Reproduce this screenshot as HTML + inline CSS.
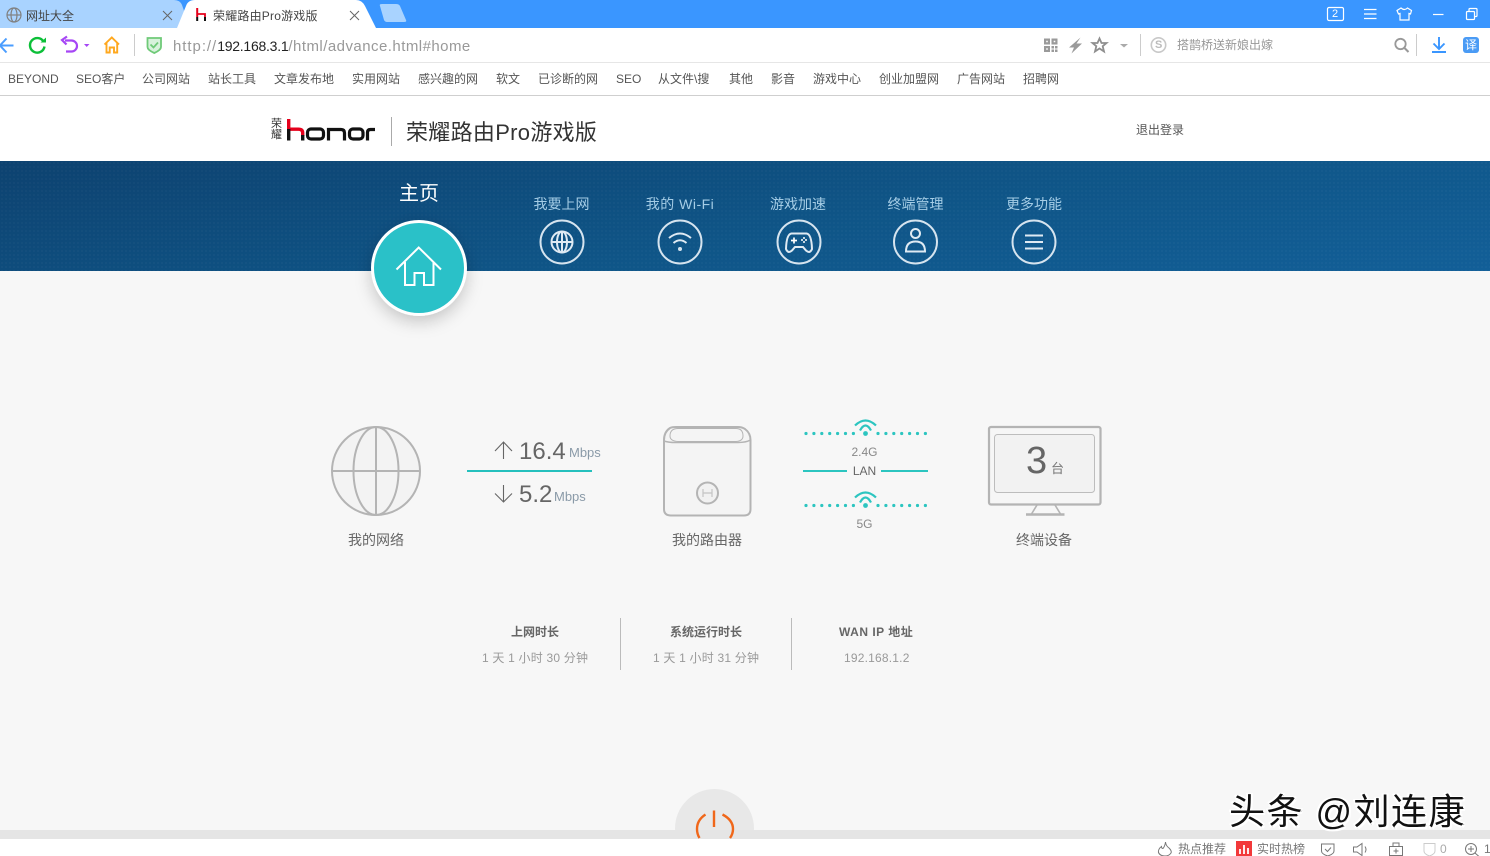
<!DOCTYPE html>
<html lang="zh"><head><meta charset="utf-8"><title>荣耀路由Pro游戏版</title>
<style>
html,body{margin:0;padding:0;width:1490px;height:856px;overflow:hidden;background:#fff}
body{position:relative;font-family:"Liberation Sans","Noto Sans CJK SC",sans-serif;font-size:12px;color:#555}
.b{position:absolute}
.t{position:absolute;white-space:nowrap;line-height:20px;height:20px}
.c{transform:translateX(-50%)}
svg.ov{position:absolute;left:0;top:0}
.bm{color:#555;top:69px}
.nav{font-size:14px;color:#a5cde6;top:194px}
.lab{font-size:14px;color:#666;top:530px}
.st{color:#666;font-weight:bold;top:622px}
.sv{color:#999;top:648px;letter-spacing:.2px}
.sb{color:#777;top:839px}
.wm{font-size:36px;line-height:44px;height:44px;letter-spacing:1.5px;color:#111;top:790px;left:1229px;text-shadow:-2px -1px 0 #fff,2px 2px 0 #fff,-1px 2px 0 #fff,2px -1px 0 #fff,1px 1px 0 #444}
</style></head><body>
<div class="b" style="left:0;top:0;width:1490px;height:28px;background:#3a96ff"></div>
<div class="b" style="left:0;top:28px;width:1490px;height:34px;background:#fff"></div>
<div class="b" style="left:0;top:62px;width:1490px;height:1px;background:#e6e6e6"></div>
<div class="b" style="left:0;top:95px;width:1490px;height:1px;background:#cfcfcf"></div>
<div class="b" style="left:0;top:161px;width:1490px;height:110px;background:radial-gradient(circle,rgba(255,255,255,.022) 1px,transparent 1.2px) 0 0/4px 4px,linear-gradient(170deg,#0d4270 0%,#0f5587 55%,#125f98 100%)"></div>
<div class="b" style="left:0;top:271px;width:1490px;height:559px;background:#f7f7f7"></div>
<div class="b" style="left:675px;top:789px;width:79px;height:79px;border-radius:50%;background:#e8e8e8"></div>
<div class="b" style="left:0;top:830px;width:1490px;height:9px;background:#e5e5e5"></div>
<div class="b" style="left:0;top:839px;width:1490px;height:17px;background:#fff"></div>

<svg class="ov" width="1490" height="856" viewBox="0 0 1490 856" fill="none">
<!-- tabs -->
<path d="M0 0H174Q180 0 182 5L190 28H0Z" fill="#a9d3ff"/>
<path d="M177 28L186 6Q188 0 195 0H356Q362 0 365 6L376 28Z" fill="#fff"/>
<path d="M380 6Q379 4 382 4H396Q399 4 400 6L406 20Q407 22 404 22H387Q385 22 384 20Z" fill="#a9d3ff"/>
<g stroke="#808080" stroke-width="1.2"><circle cx="14" cy="15" r="7"/><ellipse cx="14" cy="15" rx="3" ry="7"/><path d="M7 15H21"/></g>
<path d="M163 11L172 20M172 11L163 20M350 11L359 20M359 11L350 20" stroke="#666" stroke-width="1"/>
<path d="M197.200 8V17" stroke="#e5001b" stroke-width="2"/>
<path d="M197.200 14H205V17" stroke="#e5001b" stroke-width="1.800"/>
<path d="M197.200 17V21M205 17V21" stroke="#111" stroke-width="2"/>
<!-- window buttons -->
<g stroke="#fff" stroke-width="1.200">
<rect x="1327.500" y="7.500" width="16" height="13" rx="1.500"/>
<path d="M1364 9.500H1376.500M1364 14H1376.500M1364 18.500H1376.500"/>
<path d="M1401 8L1397 10.500L1398.500 14L1400 13.500V20H1409V13.500L1410.500 14L1411.500 10.500L1407.500 8Q1404.500 11 1401 8Z"/>
<path d="M1433 14.500H1443.500"/>
<rect x="1466.500" y="11.500" width="8" height="8" rx="1"/>
<path d="M1469 11V9.500Q1469 8.500 1470 8.500H1476Q1477 8.500 1477 9.500V15.500Q1477 16.500 1476 16.500H1475"/>
</g>
<!-- toolbar left -->
<path d="M13.500 45.500H1M6.500 38.500L0 45.500L6.500 52.500" stroke="#4a9dff" stroke-width="2"/>
<path d="M43.500 41.500A7.300 7.300 0 1 0 44.500 46.500" stroke="#0cbf38" stroke-width="2.400"/>
<path d="M40.500 42.500H46V37.500Z" fill="#0cbf38"/>
<path d="M65 40.500H71.500A5.500 5.500 0 0 1 71.500 51.500H66" stroke="#a646f5" stroke-width="2.200"/>
<path d="M67 36.500L62 40L66.500 44.500" stroke="#a646f5" stroke-width="2.200"/>
<path d="M84 44H89.500L86.700 47Z" fill="#a646f5"/>
<path d="M104.500 44.500L111.800 37.500L119 44.500M106.500 43V52.500H109.700V47.500H114V52.500H117.200V43" stroke="#ffa81e" stroke-width="1.900"/>
<path d="M134.500 34V56" stroke="#ccc"/>
<path d="M147.500 38H161V47Q161 50 154.300 53Q147.500 50 147.500 47Z" fill="#d8f2dc" stroke="#6fca78" stroke-width="1.800"/>
<path d="M150.500 44.500L153.500 47.500L158 42.500" stroke="#6fca78" stroke-width="1.800"/>
<!-- toolbar right -->
<g fill="#9a9a9a"><path d="M1044 38.500H1050V44.500H1044ZM1046.200 40.700V42.300H1047.800V40.700ZM1051.500 38.500H1057.500V44.500H1051.500ZM1053.700 40.700V42.300H1055.300V40.700ZM1044 46H1050V52H1044ZM1046.200 48.200V49.800H1047.800V48.200ZM1051.500 46H1054V48.500H1051.500ZM1055 46H1057.500V48.500H1055ZM1051.500 49.500H1054V52H1051.500ZM1055 49.500H1057.500V52H1055Z" fill-rule="evenodd"/>
<path d="M1080.500 37.500L1069 47.500H1074L1071.500 53.500L1082 43.500H1076.500Z"/>
<path d="M1120 44H1128L1124 47.500Z" fill="#aaa"/></g>
<path d="M1099.500 38.500L1101.500 43H1106.500L1102.700 46.200L1104 51.500L1099.500 48.500L1095 51.500L1096.300 46.200L1092.500 43H1097.500Z" stroke="#8f8f8f" stroke-width="1.800"/>
<path d="M1140.500 34V56M1416.500 34V56" stroke="#ccc"/>
<circle cx="1158.500" cy="45" r="7.200" stroke="#c8c8c8" stroke-width="1.600"/>
<circle cx="1400.500" cy="44" r="5.200" stroke="#999" stroke-width="1.800"/>
<path d="M1404.500 48L1408.500 52" stroke="#999" stroke-width="2"/>
<path d="M1439 37V49M1433.500 43.500L1439 49L1444.500 43.500M1432 52H1446" stroke="#3a96ff" stroke-width="1.900"/>
<rect x="1463" y="37" width="16" height="16" rx="3" fill="#4a9bf5"/>
<!-- logo -->
<path d="M288.700 119V129" stroke="#e5001b" stroke-width="3.400"/>
<path d="M288.700 129.200H298.500Q302.700 129.200 302.700 133V136" stroke="#e5001b" stroke-width="3.400"/>
<path d="M288.700 129V140.500M302.700 135V140.500" stroke="#111" stroke-width="3.400"/>
<rect x="307.500" y="129" width="16" height="10" rx="3.500" stroke="#111" stroke-width="3.200"/>
<path d="M328.500 140.500V129.500H341Q344.500 129.500 344.500 133V140.500" stroke="#111" stroke-width="3.200"/>
<rect x="349.500" y="129" width="13.500" height="10" rx="3.500" stroke="#111" stroke-width="3.200"/>
<path d="M367.500 140.500V132.500Q367.500 129.500 370.500 129.500H375" stroke="#111" stroke-width="3.200"/>
<path d="M391.500 117V146" stroke="#aaa"/>
<!-- nav -->
<g stroke="#d6e4ef" stroke-width="2">
<circle cx="562" cy="242" r="21.500"/><circle cx="680" cy="242" r="21.500"/><circle cx="799" cy="242" r="21.500"/><circle cx="915.500" cy="242" r="21.500"/><circle cx="1034" cy="242" r="21.500"/>
</g>
<g stroke="#dfeaf3" stroke-width="2">
<circle cx="562" cy="242" r="10.500"/><ellipse cx="562" cy="242" rx="5" ry="10.500"/><path d="M562 231.500V252.500M551.500 242H572.500"/>
<path d="M669 238Q680 229 691 238M673.500 243Q680 237.500 686.500 243"/>
<path d="M786 249Q786.500 234 791.500 233.500H806.500Q811.500 234 812 249Q810 254 806 250.500L803 247H795L792 250.500Q788 254 786 249Z"/>
<path d="M791 240.500H797M794 237.500V243.500" stroke="#fff" stroke-width="1.700"/>
<circle cx="915.500" cy="233.500" r="4.500"/>
<path d="M906 251.500Q906 241.500 915.500 241.500Q925 241.500 925 251.500Z"/>
<path d="M1025 235.500H1043M1025 242H1043M1025 248.500H1043" stroke-width="2"/>
</g>
<circle cx="680" cy="249" r="2" fill="#d6e4ef"/>
<g fill="#fff"><circle cx="804" cy="238" r="1"/><circle cx="804" cy="242" r="1"/><circle cx="802" cy="240" r="1"/><circle cx="806" cy="240" r="1"/></g>
<!-- home button -->
<defs><filter id="sh" x="-40%" y="-40%" width="180%" height="180%"><feDropShadow dx="0" dy="6" stdDeviation="8" flood-color="#000" flood-opacity=".2"/></filter></defs>
<circle cx="419" cy="268" r="46.500" fill="#29c1c8" stroke="#fff" stroke-width="3" filter="url(#sh)"/>
<path d="M396.500 269.500L418.700 247.500L441 269.500M405 262V285H414.500V273H424V285H433.500V262" stroke="#fff" stroke-width="2"/>
<!-- globe -->
<g stroke="#b4b4b4" stroke-width="2">
<circle cx="376" cy="471" r="44" fill="#f3f3f3"/><ellipse cx="376" cy="471" rx="22.500" ry="44"/><path d="M376 427V515M332 471H420"/>
</g>
<!-- speed -->
<path d="M503.500 459V442M495 451L503.500 442L512 451M503.500 485V502M495 493.500L503.500 502L512 493.500" stroke="#666" stroke-width="1.100"/>
<path d="M467 471H592" stroke="#25c0bd" stroke-width="2"/>
<!-- router -->
<g stroke="#b4b4b4" stroke-width="2">
<path d="M664 440Q664 432 670 428Q672 427 676 427H738Q742 427 745 429Q750.500 433 750.500 440V509Q750.500 515.500 744 515.500H671Q664 515.500 664 509Z" fill="#f4f4f4"/>
<path d="M664 441Q668 442.500 676 442.500H738Q746 442.500 750.500 440" stroke-width="1.500"/>
<path d="M670 436Q670 428.500 678 428.500H736Q743 428.500 743 436Q743 441 736 441.500H678Q670 441 670 436Z" stroke-width="1"/>
<circle cx="707.500" cy="493" r="10.500" fill="#f1f1f1"/>
<path d="M703 489V497M712 489V497M703 493H712" stroke="#c4c4c4" stroke-width="1.200"/>
</g>
<!-- wifi rows -->
<g stroke="#2cc5c0">
<path d="M806 433.500H854M878 433.500H926M806 505.500H854M878 505.500H926" stroke-width="3.200" stroke-linecap="round" stroke-dasharray="0 7.900"/>
<path d="M855 425.500Q865.500 415.500 876 425.500M860 430.500Q865.500 420.500 871 430.500M855 497.500Q865.500 487.500 876 497.500M860 502.500Q865.500 492.500 871 502.500" stroke-width="2.200"/>
<path d="M803 471H847M881 471H928" stroke-width="2"/>
</g>
<circle cx="865.500" cy="433.500" r="2.400" fill="#2cc5c0"/><circle cx="865.500" cy="505.500" r="2.400" fill="#2cc5c0"/>
<!-- monitor -->
<rect x="989" y="427" width="111.500" height="77.500" rx="2" fill="#f6f6f6" stroke="#b4b4b4" stroke-width="2.200"/>
<rect x="994.500" y="434.500" width="100" height="58" rx="3" fill="#f2f2f2" stroke="#bdbdbd"/>
<path d="M1037 505L1031.500 514M1055 505L1060.500 514" stroke="#b4b4b4" stroke-width="1.600"/>
<path d="M1026 514.500H1064.500" stroke="#b4b4b4" stroke-width="2.500"/>
<!-- stats -->
<path d="M620.500 618V670M791.500 618V670" stroke="#bbb"/>
<!-- power -->
<path d="M714 810.500V827" stroke="#f0671a" stroke-width="2.400"/>
<path d="M705.500 814.500Q697 820 697 829Q697 834 699.500 838M722.500 814.500Q733 820 733 829Q733 834 730 838" stroke="#f0671a" stroke-width="2.400"/>
<!-- status bar -->
<g stroke="#777" stroke-width="1">
<path d="M1165.500 842Q1166 846 1169 848Q1172 851 1171 853Q1169 856 1165 856Q1160 856 1158.500 852.500Q1158 849 1161.500 846.500Q1161.500 848.500 1163 848.500Q1165 846 1165.500 842Z"/>
<path d="M1321.500 844H1334V851Q1334 854 1327.700 856Q1321.500 854 1321.500 851ZM1325 849L1327.500 851.500L1331 847.500"/>
<path d="M1353.500 847V852H1357L1362 855.500V843.500L1357 847ZM1365 846.500Q1367 849.500 1365 852.500"/>
<path d="M1389.500 846.500H1402.500V855.500H1389.500ZM1393 846.500V843H1399V846.500M1396 848.500V853.500M1393.500 851H1398.500"/>
<path d="M1424 843.500H1435V851Q1435 854 1429.500 856Q1424 854 1424 851Z" stroke="#ccc"/>
<circle cx="1471" cy="849" r="5.500"/><path d="M1475 853L1479 856.500M1468 849H1474M1471 846V852"/>
</g>
<rect x="1236" y="841" width="16" height="15" fill="#f2393a"/>
<path d="M1240 849V854M1244 845V854M1248 848V854" stroke="#fff" stroke-width="1.800"/>
</svg>

<!-- tab text -->
<div class="t" style="left:26px;top:6px;color:#444">网址大全</div>
<div class="t" style="left:213px;top:6px;color:#444;letter-spacing:.2px">荣耀路由Pro游戏版</div>
<div class="t" style="left:1332px;top:4px;color:#fff;font-size:11px">2</div>
<!-- address -->
<div class="t" style="left:173px;top:36px;font-size:15px;color:#999"><span style="letter-spacing:.95px">http://</span><span style="color:#222;font-size:14px;letter-spacing:-.25px">192.168.3.1</span><span style="letter-spacing:.46px">/html/advance.html#home</span></div>
<div class="t" style="left:1177px;top:35px;color:#999">搭鹊桥送新娘出嫁</div>
<div class="t" style="left:1155px;top:35px;color:#bbb;font-size:11px;font-weight:bold">S</div>
<div class="t" style="left:1465px;top:35px;color:#fff">译</div>
<!-- bookmarks -->
<div class="t bm" style="left:8px">BEYOND</div>
<div class="t bm" style="left:76px">SEO客户</div>
<div class="t bm" style="left:142px">公司网站</div>
<div class="t bm" style="left:208px">站长工具</div>
<div class="t bm" style="left:274px">文章发布地</div>
<div class="t bm" style="left:352px">实用网站</div>
<div class="t bm" style="left:418px">感兴趣的网</div>
<div class="t bm" style="left:496px">软文</div>
<div class="t bm" style="left:538px">已诊断的网</div>
<div class="t bm" style="left:616px">SEO</div>
<div class="t bm" style="left:658px">从文件\搜</div>
<div class="t bm" style="left:729px">其他</div>
<div class="t bm" style="left:771px">影音</div>
<div class="t bm" style="left:813px">游戏中心</div>
<div class="t bm" style="left:879px">创业加盟网</div>
<div class="t bm" style="left:957px">广告网站</div>
<div class="t bm" style="left:1023px">招聘网</div>
<!-- header -->
<div class="b" style="left:271px;top:119px;width:12px;font-size:11px;line-height:11px;color:#333">荣<br>耀</div>
<div class="t" style="left:406px;top:121px;font-size:22px;line-height:24px;height:24px;color:#333;letter-spacing:.3px">荣耀路由Pro游戏版</div>
<div class="t" style="left:1136px;top:120px;color:#555">退出登录</div>
<!-- nav -->
<div class="t" style="left:399px;top:184px;font-size:20px;color:#fff">主页</div>
<div class="t nav c" style="left:561.500px">我要上网</div>
<div class="t nav c" style="left:680px;letter-spacing:.5px">我的 Wi-Fi</div>
<div class="t nav c" style="left:798px">游戏加速</div>
<div class="t nav c" style="left:915.500px">终端管理</div>
<div class="t nav c" style="left:1034px">更多功能</div>
<!-- speed -->
<div class="t" style="left:519px;top:442px;font-size:24px;line-height:20px;color:#666">16.4</div>
<div class="t" style="left:569px;top:443px;font-size:13px;color:#8a9aa8">Mbps</div>
<div class="t" style="left:519px;top:485px;font-size:24px;line-height:20px;color:#666">5.2</div>
<div class="t" style="left:554px;top:487px;font-size:13px;color:#8a9aa8">Mbps</div>
<div class="t lab" style="left:348px">我的网络</div>
<div class="t lab" style="left:672px">我的路由器</div>
<div class="t lab" style="left:1016px">终端设备</div>
<div class="t c" style="left:864.500px;top:442px;color:#888">2.4G</div>
<div class="t c" style="left:864.500px;top:461px;color:#666">LAN</div>
<div class="t c" style="left:864.500px;top:514px;color:#888">5G</div>
<div class="t" style="left:1026px;top:451px;font-size:38px;color:#666">3</div>
<div class="t" style="left:1051px;top:459px;color:#777;font-size:13px">台</div>
<!-- stats -->
<div class="t st" style="left:511px">上网时长</div>
<div class="t st" style="left:670px">系统运行时长</div>
<div class="t st" style="left:839px;letter-spacing:.5px">WAN IP 地址</div>
<div class="t sv" style="left:482px">1 天 1 小时 30 分钟</div>
<div class="t sv" style="left:653px">1 天 1 小时 31 分钟</div>
<div class="t sv" style="left:844px">192.168.1.2</div>
<!-- watermark -->
<div class="t wm">头条 @刘连康</div>
<!-- status -->
<div class="t sb" style="left:1178px">热点推荐</div>
<div class="t sb" style="left:1257px">实时热榜</div>
<div class="t sb" style="left:1440px;color:#aaa">0</div>
<div class="t sb" style="left:1484px">1</div>
</body></html>
